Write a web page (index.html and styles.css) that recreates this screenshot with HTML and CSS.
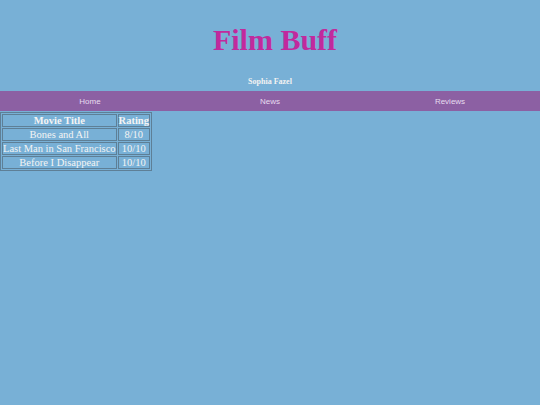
FILE: index.html
```html
<!DOCTYPE html>
<html>
<head>
<meta charset="utf-8">
<link rel="stylesheet" href="styles.css">
</head>
<body>
<header class="site-header">
  <h1 class="title">Film Buff</h1>
  <p class="author">Sophia Fazel</p>
</header>
<nav class="nav">
  <a class="nav-link" href="#">Home</a>
  <a class="nav-link" href="#">News</a>
  <a class="nav-link" href="#">Reviews</a>
</nav>
<table class="movies">
  <tr><th>Movie Title</th><th>Rating</th></tr>
  <tr><td>Bones and All</td><td>8/10</td></tr>
  <tr><td>Last Man in San Francisco</td><td>10/10</td></tr>
  <tr><td>Before I Disappear</td><td>10/10</td></tr>
</table>
</body>
</html>
```
FILE: styles.css
```css
html, body {
  margin: 0;
  padding: 0;
  background: #78b0d6;
  font-family: "Liberation Serif", "Times New Roman", serif;
}
.site-header {
  text-align: center;
  padding-top: 22px;
}
.title {
  margin: 0 0 0 10px;
  font-size: 30px;
  line-height: 35px;
  font-weight: bold;
  color: #c12a9d;
}
.author {
  margin: 20px 0 0 0;
  font-size: 8px;
  line-height: 10px;
  font-weight: bold;
  color: #f2f2f2;
}
.nav {
  margin-top: 4px;
  display: grid;
  grid-template-columns: 1fr 1fr 1fr;
  height: 20px;
  align-items: center;
  background: #8c60a3;
}
.nav-link {
  text-align: center;
  font-family: "Liberation Sans", Arial, sans-serif;
  font-size: 8px;
  color: #e6dcef;
  text-decoration: none;
}
.movies {
  margin-top: 1px;
  border: 1px solid #5e7f96;
  border-spacing: 1px;
  color: #f4f4f4;
  font-size: 10.5px;
}
.movies th, .movies td {
  border: 1px solid #5e7f96;
  padding: 0;
  text-align: center;
  height: 11px;
  line-height: 11px;
}
```
